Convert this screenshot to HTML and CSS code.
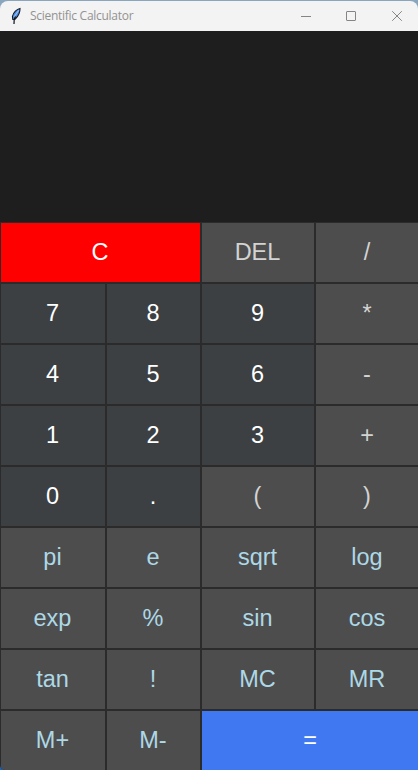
FILE: index.html
```
<!DOCTYPE html>
<html lang="en">
<head>
<meta charset="utf-8">
<title>Scientific Calculator</title>
<link rel="stylesheet" href="styles.css">
</head>
<body>
<div class="window">
  <header class="titlebar">
    <svg class="feather" width="12" height="18" viewBox="0 0 12 18">
      <path d="M10 1.5 C7 2 3.2 5.5 2.4 9.5 L2.8 12.5 L5 12.3 C8 9.5 10.2 5.5 10 1.5Z" fill="#4f8fe6" stroke="#15181f" stroke-width="1.1"/>
      <path d="M8.8 3.2 L4 10" stroke="#8fc0fa" stroke-width="1.1"/>
      <path d="M5.5 9.5 L4.2 12.5 L4 17" fill="none" stroke="#10131a" stroke-width="1.2"/>
    </svg>
    <h1 class="title">Scientific Calculator</h1>
    <div class="controls">
      <svg width="10" height="10" viewBox="0 0 10 10"><path d="M0 5.5H10"/></svg>
      <svg width="10" height="10" viewBox="0 0 10 10"><rect x=".5" y=".5" width="9" height="9" rx=".5"/></svg>
      <svg class="close" width="10" height="10" viewBox="0 0 10 10"><path d="M.2 .2L9.8 9.8M9.8 .2L.2 9.8"/></svg>
    </div>
  </header>
  <div class="display"></div>
  <main class="keys">
    <button class="key clear wide">C</button><button class="key op">DEL</button><button class="key op">/</button>
    <button class="key num">7</button><button class="key num">8</button><button class="key num">9</button><button class="key op">*</button>
    <button class="key num">4</button><button class="key num">5</button><button class="key num">6</button><button class="key op">-</button>
    <button class="key num">1</button><button class="key num">2</button><button class="key num">3</button><button class="key op">+</button>
    <button class="key num">0</button><button class="key num">.</button><button class="key op">(</button><button class="key op">)</button>
    <button class="key fn">pi</button><button class="key fn">e</button><button class="key fn">sqrt</button><button class="key fn">log</button>
    <button class="key fn">exp</button><button class="key fn">%</button><button class="key fn">sin</button><button class="key fn">cos</button>
    <button class="key fn">tan</button><button class="key fn">!</button><button class="key fn">MC</button><button class="key fn">MR</button>
    <button class="key fn">M+</button><button class="key fn">M-</button><button class="key equals wide">=</button>
  </main>
</div>
</body>
</html>
```
FILE: styles.css
```
* { box-sizing: border-box; }
body {
  margin: 0;
  width: 418px;
  height: 770px;
  overflow: hidden;
  background: linear-gradient(#8aa6bf 0 50%, #1763b8 50%);
}
.window {
  height: 770px;
  padding-top: 1px;
  display: flex;
  flex-direction: column;
}
.titlebar {
  flex: none;
  height: 30px;
  display: flex;
  align-items: center;
  padding: 0 16px 0 10px;
  background: #f3f3f3;
  border-radius: 8px 8px 0 0;
}
.feather { flex: none; }
.title {
  margin: 0 0 0 8px;
  font: 400 12px/16px "Open Sans", "Noto Sans", sans-serif;
  letter-spacing: -0.28px;
  color: #929292;
  white-space: nowrap;
}
.controls {
  margin-left: auto;
  display: flex;
  gap: 35px;
}
.controls svg {
  fill: none;
  stroke: #858585;
  stroke-width: 1;
}
.controls .close { margin-left: 1px; }
.display {
  flex: none;
  height: 191px;
  background: #1e1e1e;
}
.keys {
  flex: none;
  width: 420px;
  height: 548px;
  display: grid;
  grid-template-columns: 104px 93px 112px 103px;
  grid-auto-rows: 59px;
  gap: 2px;
  padding: 1px;
  background: #2b2b2b;
  border-bottom-left-radius: 5px;
  overflow: hidden;
}
.key {
  margin: 0;
  padding: 0 1px 2px 0;
  border: 0;
  font: 23.5px/28px "Liberation Sans", Arial, sans-serif;
}
.wide { grid-column: span 2; }
.clear { background: #ff0000; color: #fff; }
.num { background: #3c4043; color: #fff; }
.op { background: #4d4d4d; color: #d3d3d3; }
.fn { background: #4d4d4d; color: #add8e6; }
.equals { background: #4078f2; color: #fff; }
```
